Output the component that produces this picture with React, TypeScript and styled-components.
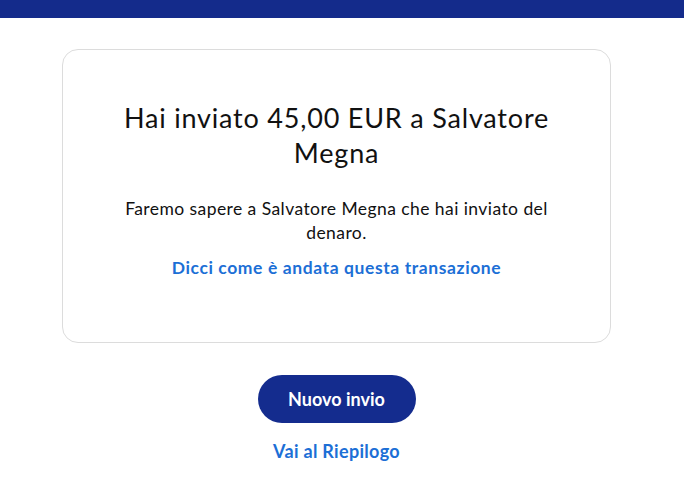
import React from "react";
import styled, { createGlobalStyle } from "styled-components";

const Global = createGlobalStyle`
  html, body { margin: 0; padding: 0; background: #ffffff; }
  body { font-family: Lato, "Open Sans", sans-serif; color: #111111; }
`;

const TopBar = styled.header`
  height: 18px;
  background: #142b8b;
`;

const Main = styled.main`
  width: 549px;
  margin: 31px 0 0 62px;
  display: flex;
  flex-direction: column;
  align-items: center;
`;

const Card = styled.section`
  box-sizing: border-box;
  width: 100%;
  height: 294px;
  border: 1px solid #dcdcdc;
  border-radius: 16px;
  padding: 50px 58px 0;
  display: flex;
  flex-direction: column;
  align-items: center;
  text-align: center;
`;

const Title = styled.h1`
  margin: 0;
  font-size: 27px;
  font-weight: 400;
  line-height: 35px;
  letter-spacing: 0.8px;
`;

const Body = styled.p`
  margin: 27px 0 0;
  font-size: 17.5px;
  line-height: 24px;
  letter-spacing: 0.43px;
`;

const Link = styled.a<{ $mt: number; $size: number; $ls: number }>`
  margin-top: ${(p) => p.$mt}px;
  font-size: ${(p) => p.$size}px;
  letter-spacing: ${(p) => p.$ls}px;
  font-weight: 700;
  line-height: 24px;
  color: #1c6fd6;
  text-decoration: none;
`;

const Button = styled.button`
  margin-top: 32px;
  width: 158px;
  height: 48px;
  border: none;
  border-radius: 24px;
  background: #142c8e;
  color: #ffffff;
  font-family: inherit;
  font-size: 18px;
  font-weight: 700;
`;

export default function App() {
  return (
    <>
      <Global />
      <TopBar />
      <Main>
        <Card>
          <Title>Hai inviato 45,00 EUR a Salvatore Megna</Title>
          <Body>Faremo sapere a Salvatore Megna che hai inviato del denaro.</Body>
          <Link $mt={11} $size={17.5} $ls={0.6}>
            Dicci come è andata questa transazione
          </Link>
        </Card>
        <Button>Nuovo invio</Button>
        <Link $mt={16} $size={18} $ls={0.3}>
          Vai al Riepilogo
        </Link>
      </Main>
    </>
  );
}
